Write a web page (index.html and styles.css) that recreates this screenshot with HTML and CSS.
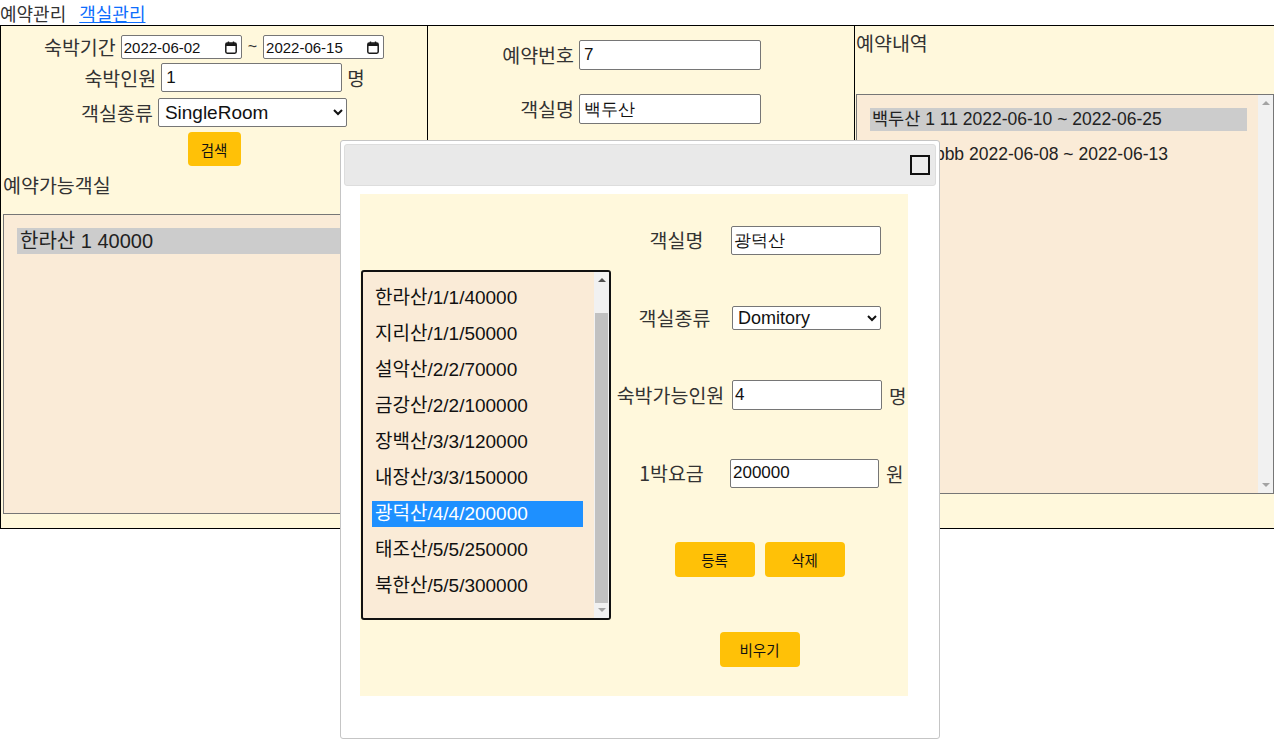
FILE: index.html
```html
<!DOCTYPE html>
<html lang="ko">
<head>
<meta charset="utf-8">
<title>예약관리</title>
<link rel="stylesheet" href="styles.css">
</head>
<body>
<nav class="topnav">
  <span class="nav-current">예약관리</span>
  <a class="nav-link" href="#">객실관리</a>
</nav>

<main class="board">
  <section class="col col-search">
    <div class="row row-date">
      <label class="lbl">숙박기간</label>
      <span class="datefield">
        <input type="text" class="date-input" value="2022-06-02">
        <svg class="cal-icon" width="12" height="13" viewBox="0 0 12 13" aria-hidden="true">
          <path d="M3.5 0.5v2.5M8.5 0.5v2.5" stroke="#1a1a1a" stroke-width="1.4" fill="none"/>
          <rect x="0.8" y="2" width="10.4" height="10.2" rx="1.4" fill="none" stroke="#1a1a1a" stroke-width="1.5"/>
          <rect x="1" y="2.2" width="10" height="2.8" fill="#1a1a1a"/>
        </svg>
      </span>
      <span class="tilde">~</span>
      <span class="datefield">
        <input type="text" class="date-input" value="2022-06-15">
        <svg class="cal-icon" width="12" height="13" viewBox="0 0 12 13" aria-hidden="true">
          <path d="M3.5 0.5v2.5M8.5 0.5v2.5" stroke="#1a1a1a" stroke-width="1.4" fill="none"/>
          <rect x="0.8" y="2" width="10.4" height="10.2" rx="1.4" fill="none" stroke="#1a1a1a" stroke-width="1.5"/>
          <rect x="1" y="2.2" width="10" height="2.8" fill="#1a1a1a"/>
        </svg>
      </span>
    </div>
    <div class="row row-people">
      <label class="lbl">숙박인원</label>
      <input type="text" class="txt txt-people" value="1">
      <span class="unit">명</span>
    </div>
    <div class="row row-type">
      <label class="lbl">객실종류</label>
      <select class="sel sel-type">
        <option selected>SingleRoom</option>
        <option>DoubleRoom</option>
        <option>Domitory</option>
      </select>
    </div>
    <div class="row row-btn">
      <button class="btn btn-search" type="button">검색</button>
    </div>
    <h3 class="sec-title sec-title-avail">예약가능객실</h3>
    <div class="listbox listbox-avail">
      <div class="list-items list-items-avail">
        <div class="item item-avail item-active">한라산 1 40000</div>
      </div>
    </div>
  </section>

  <section class="col col-detail">
    <div class="detail-grid">
      <label class="lbl lbl-right">예약번호</label>
      <input type="text" class="txt txt-detail" value="7">
      <label class="lbl lbl-right">객실명</label>
      <input type="text" class="txt txt-detail" value="백두산">
    </div>
  </section>

  <section class="col col-history">
    <h3 class="sec-title sec-title-history">예약내역</h3>
    <div class="listbox listbox-history">
      <div class="list-items list-items-history">
        <div class="item item-history item-active">백두산 1 11 2022-06-10 ~ 2022-06-25</div>
        <div class="item item-history">백두산 bbbb 2022-06-08 ~ 2022-06-13</div>
      </div>
      <div class="vscroll vscroll-history">
        <div class="vscroll-btn vscroll-btn-top"><span class="arrow-up arrow-off"></span></div>
        <div class="vscroll-track"></div>
        <div class="vscroll-btn vscroll-btn-bottom"><span class="arrow-down arrow-off"></span></div>
      </div>
    </div>
  </section>
</main>

<div class="dialog" role="dialog">
  <div class="dialog-titlebar">
    <button class="dialog-close" type="button" aria-label="close"></button>
  </div>
  <div class="dialog-content">
    <div class="room-editor">
      <div class="room-list">
        <div class="room-items">
          <div class="room-item">한라산/1/1/40000</div>
          <div class="room-item">지리산/1/1/50000</div>
          <div class="room-item">설악산/2/2/70000</div>
          <div class="room-item">금강산/2/2/100000</div>
          <div class="room-item">장백산/3/3/120000</div>
          <div class="room-item">내장산/3/3/150000</div>
          <div class="room-item room-item-selected">광덕산/4/4/200000</div>
          <div class="room-item">태조산/5/5/250000</div>
          <div class="room-item">북한산/5/5/300000</div>
        </div>
        <div class="vscroll vscroll-room">
          <div class="vscroll-btn vscroll-btn-top"><span class="arrow-up"></span></div>
          <div class="vscroll-gap"></div>
          <div class="vscroll-thumb"></div>
          <div class="vscroll-btn vscroll-btn-bottom"><span class="arrow-down arrow-off"></span></div>
        </div>
      </div>

      <div class="room-form">
        <div class="frow frow-1">
          <label class="flbl flbl-name">객실명</label>
          <input type="text" class="ftxt ftxt-name" value="광덕산">
          <span class="funit"></span>
        </div>
        <div class="frow frow-2">
          <label class="flbl flbl-type">객실종류</label>
          <select class="fsel">
            <option>SingleRoom</option>
            <option>DoubleRoom</option>
            <option selected>Domitory</option>
          </select>
          <span class="funit"></span>
        </div>
        <div class="frow frow-3">
          <label class="flbl">숙박가능인원</label>
          <input type="text" class="ftxt ftxt-people" value="4">
          <span class="funit">명</span>
        </div>
        <div class="frow frow-4">
          <label class="flbl flbl-price">1박요금</label>
          <input type="text" class="ftxt ftxt-price" value="200000">
          <span class="funit funit-price">원</span>
        </div>
        <div class="fbtns fbtns-main">
          <button class="btn btn-form" type="button">등록</button>
          <button class="btn btn-form" type="button">삭제</button>
        </div>
        <div class="fbtns fbtns-clear">
          <button class="btn btn-form" type="button">비우기</button>
        </div>
      </div>
    </div>
  </div>
</div>
</body>
</html>
```

FILE: styles.css
```css
* {
  box-sizing: border-box;
}

html,
body {
  margin: 0;
  padding: 0;
}

body {
  width: 1274px;
  height: 749px;
  overflow: hidden;
  position: relative;
  background: #ffffff;
  color: #222222;
  font-family: "Liberation Sans", "Noto Sans CJK KR", sans-serif;
}

/* ---------- top navigation ---------- */
.topnav {
  height: 25px;
  display: flex;
  align-items: center;
  font-family: "Noto Sans CJK KR", sans-serif;
  font-size: 18px;
  line-height: 22px;
}

.nav-current {
  color: #333333;
}

.nav-link {
  margin-left: 13px;
  color: #0d6efd;
  text-decoration: underline;
}

/* ---------- main board ---------- */
.board {
  display: flex;
  height: 504px;
  border: 1px solid #000000;
  border-right: 0;
  background: #fff8dc;
}

.col {
  height: 100%;
}

.lbl {
  font-family: "Noto Sans CJK KR", sans-serif;
  font-size: 19.5px;
  line-height: 24px;
  color: #333333;
}

.txt {
  border: 1px solid #767676;
  border-radius: 2px;
  background: #ffffff;
  padding: 1px 4px;
  color: #111111;
}

/* column 1 : search */
.col-search {
  width: 427px;
  flex: none;
  border-right: 1px solid #000000;
  padding: 9px 2px 0 2px;
  display: flex;
  flex-direction: column;
}

.row {
  display: flex;
  justify-content: center;
  align-items: center;
  gap: 5px;
}

.row-date {
  height: 24px;
  margin-bottom: 4px;
}

.row-people {
  height: 29px;
  margin-bottom: 6px;
  padding-left: 21px;
}

.row-type {
  height: 29px;
  margin-bottom: 5px;
}

.row-btn {
  height: 34px;
}

.datefield {
  width: 121px;
  height: 24px;
  display: flex;
  align-items: center;
  border: 1px solid #767676;
  border-radius: 2px;
  background: #ffffff;
  padding: 0 4px 0 2px;
}

.date-input {
  flex: 1;
  min-width: 0;
  border: 0;
  padding: 0;
  background: transparent;
  font-family: "Liberation Sans", sans-serif;
  font-size: 15px;
  color: #111111;
}

.cal-icon {
  flex: none;
  display: block;
}

.tilde {
  font-size: 16px;
  padding: 0 1px;
  color: #333333;
}

.txt-people {
  width: 181px;
  height: 29px;
  font-size: 17px;
}

.unit {
  font-family: "Noto Sans CJK KR", sans-serif;
  font-size: 19px;
  color: #333333;
}

.sel {
  border: 1px solid #767676;
  border-radius: 2px;
  background-color: #ffffff;
  color: #111111;
}

.sel-type {
  width: 189px;
  height: 29px;
  font-size: 19px;
  padding: 0 2px;
}

.btn {
  border: 0;
  border-radius: 4px;
  background: #ffc107;
  color: #111111;
  font-family: "Noto Sans CJK KR", sans-serif;
  font-size: 14.5px;
  cursor: pointer;
}

.btn-search {
  width: 53px;
  height: 34px;
  padding: 0;
}

.sec-title {
  margin: 0;
  font-family: "Noto Sans CJK KR", sans-serif;
  font-weight: normal;
  font-size: 19.5px;
  line-height: 24px;
  color: #333333;
}

.sec-title-avail {
  margin-top: 7px;
}

.listbox {
  display: flex;
  border: 1px solid #767676;
  background: #faebd7;
  overflow: hidden;
}

.listbox-avail {
  margin-top: 17px;
  height: 300px;
}

.list-items {
  flex: 1;
  min-width: 0;
  padding-top: 13px;
  padding-left: 13px;
}

.item {
  white-space: nowrap;
  color: #222222;
}

.item-active {
  background: #cccccc;
}

.item-avail {
  height: 26px;
  line-height: 26px;
  font-size: 20px;
  padding-left: 3px;
}

/* column 2 : detail */
.col-detail {
  width: 427px;
  flex: none;
  border-right: 1px solid #000000;
  padding-top: 14px;
}

.detail-grid {
  display: grid;
  grid-template-columns: 146px 182px;
  column-gap: 5px;
  row-gap: 24px;
  align-items: center;
}

.lbl-right {
  text-align: right;
}

.txt-detail {
  width: 182px;
  height: 30px;
  font-size: 17px;
}

/* column 3 : history */
.col-history {
  flex: 1;
  min-width: 0;
  padding-left: 1px;
  display: flex;
  flex-direction: column;
}

.sec-title-history {
  margin-top: 5px;
}

.listbox-history {
  margin-top: 39px;
  height: 400px;
}

.list-items-history {
  padding-right: 11px;
}

.item-history {
  height: 23px;
  line-height: 23px;
  font-size: 17.5px;
  padding-left: 2px;
  margin-bottom: 12px;
}

/* fake scrollbars */
.vscroll {
  flex: none;
  width: 15px;
  height: 100%;
  background: #f1f1f1;
  display: flex;
  flex-direction: column;
}

.vscroll-btn {
  flex: none;
  display: flex;
  align-items: center;
  justify-content: center;
}

.vscroll-btn-top {
  height: 17px;
}

.vscroll-btn-bottom {
  height: 15px;
}

.vscroll-history .vscroll-btn-top {
  height: 16px;
}

.vscroll-history .vscroll-btn-bottom {
  height: 16px;
}

.vscroll-track {
  flex: 1;
}

.vscroll-gap {
  height: 24px;
  flex: none;
}

.vscroll-thumb {
  flex: 1;
  margin: 0 1px;
  background: #c1c1c1;
}

.arrow-up {
  width: 0;
  height: 0;
  border-left: 4px solid transparent;
  border-right: 4px solid transparent;
  border-bottom: 4px solid #505050;
}

.arrow-down {
  width: 0;
  height: 0;
  border-left: 4px solid transparent;
  border-right: 4px solid transparent;
  border-top: 4px solid #505050;
}

.arrow-up.arrow-off {
  border-bottom-color: #a3a3a3;
}

.arrow-down.arrow-off {
  border-top-color: #a3a3a3;
}

/* ---------- dialog ---------- */
.dialog {
  position: absolute;
  left: 340px;
  top: 140px;
  width: 600px;
  height: 599px;
  background: #ffffff;
  border: 1px solid #c5c5c5;
  border-radius: 3px;
  padding: 3px;
  display: flex;
  flex-direction: column;
}

.dialog-titlebar {
  height: 42px;
  flex: none;
  background: #e9e9e9;
  border: 1px solid #dddddd;
  border-radius: 3px;
  display: flex;
  justify-content: flex-end;
  align-items: center;
  padding-right: 5px;
}

.dialog-close {
  width: 20px;
  height: 20px;
  padding: 0;
  border: 2px solid #111111;
  background: #ededed;
  border-radius: 0;
}

.dialog-content {
  padding: 8px 0 0 16px;
}

.room-editor {
  width: 548px;
  height: 502px;
  background: #fff8dc;
  display: flex;
}

.room-list {
  align-self: center;
  flex: none;
  margin-left: 1px;
  margin-top: -1px;
  width: 250px;
  height: 350px;
  border: 2px solid #111111;
  border-radius: 3px;
  background: #faebd7;
  display: flex;
  overflow: hidden;
}

.room-items {
  flex: 1;
  min-width: 0;
  padding: 13px 11px 0 9px;
}

.room-item {
  height: 26px;
  line-height: 26px;
  margin-bottom: 10px;
  padding-left: 3px;
  font-size: 19px;
  color: #111111;
  white-space: nowrap;
}

.room-item-selected {
  background: #1e90ff;
  color: #ffffff;
}

.room-form {
  flex: 1;
  min-width: 0;
  padding-top: 7px;
  display: grid;
  grid-template-columns: 119px 153px 1fr;
  grid-template-rows: 78px 78px 76px 80px 93px 87px;
  align-items: center;
}

.frow {
  display: contents;
}

.flbl {
  text-align: center;
  font-family: "Noto Sans CJK KR", sans-serif;
  font-size: 19.5px;
  line-height: 24px;
  color: #333333;
}

.flbl-name {
  padding-left: 12px;
}

.flbl-type {
  padding-left: 8px;
}

.flbl-price {
  padding-left: 2px;
}

.ftxt {
  width: 150px;
  margin-left: 1px;
  border: 1px solid #767676;
  border-radius: 2px;
  background: #ffffff;
  padding: 1px 2px;
  font-size: 17px;
  color: #111111;
}

.ftxt-name {
  height: 29px;
}

.ftxt-people {
  height: 30px;
  margin-left: 2px;
}

.ftxt-price {
  height: 29px;
  width: 149px;
  margin-left: 0;
}

.fsel {
  width: 149px;
  height: 24px;
  margin-left: 2px;
  border: 1px solid #767676;
  border-radius: 2px;
  background-color: #ffffff;
  font-size: 18px;
  color: #111111;
  padding: 0 1px;
}

.funit {
  padding-left: 6px;
  font-family: "Noto Sans CJK KR", sans-serif;
  font-size: 19px;
  color: #333333;
}

.funit-price {
  padding-left: 3px;
}

.fbtns {
  grid-column: 1 / -1;
  display: flex;
  justify-content: center;
  gap: 10px;
}

.btn-form {
  width: 80px;
  height: 35px;
  padding: 0;
}
```
